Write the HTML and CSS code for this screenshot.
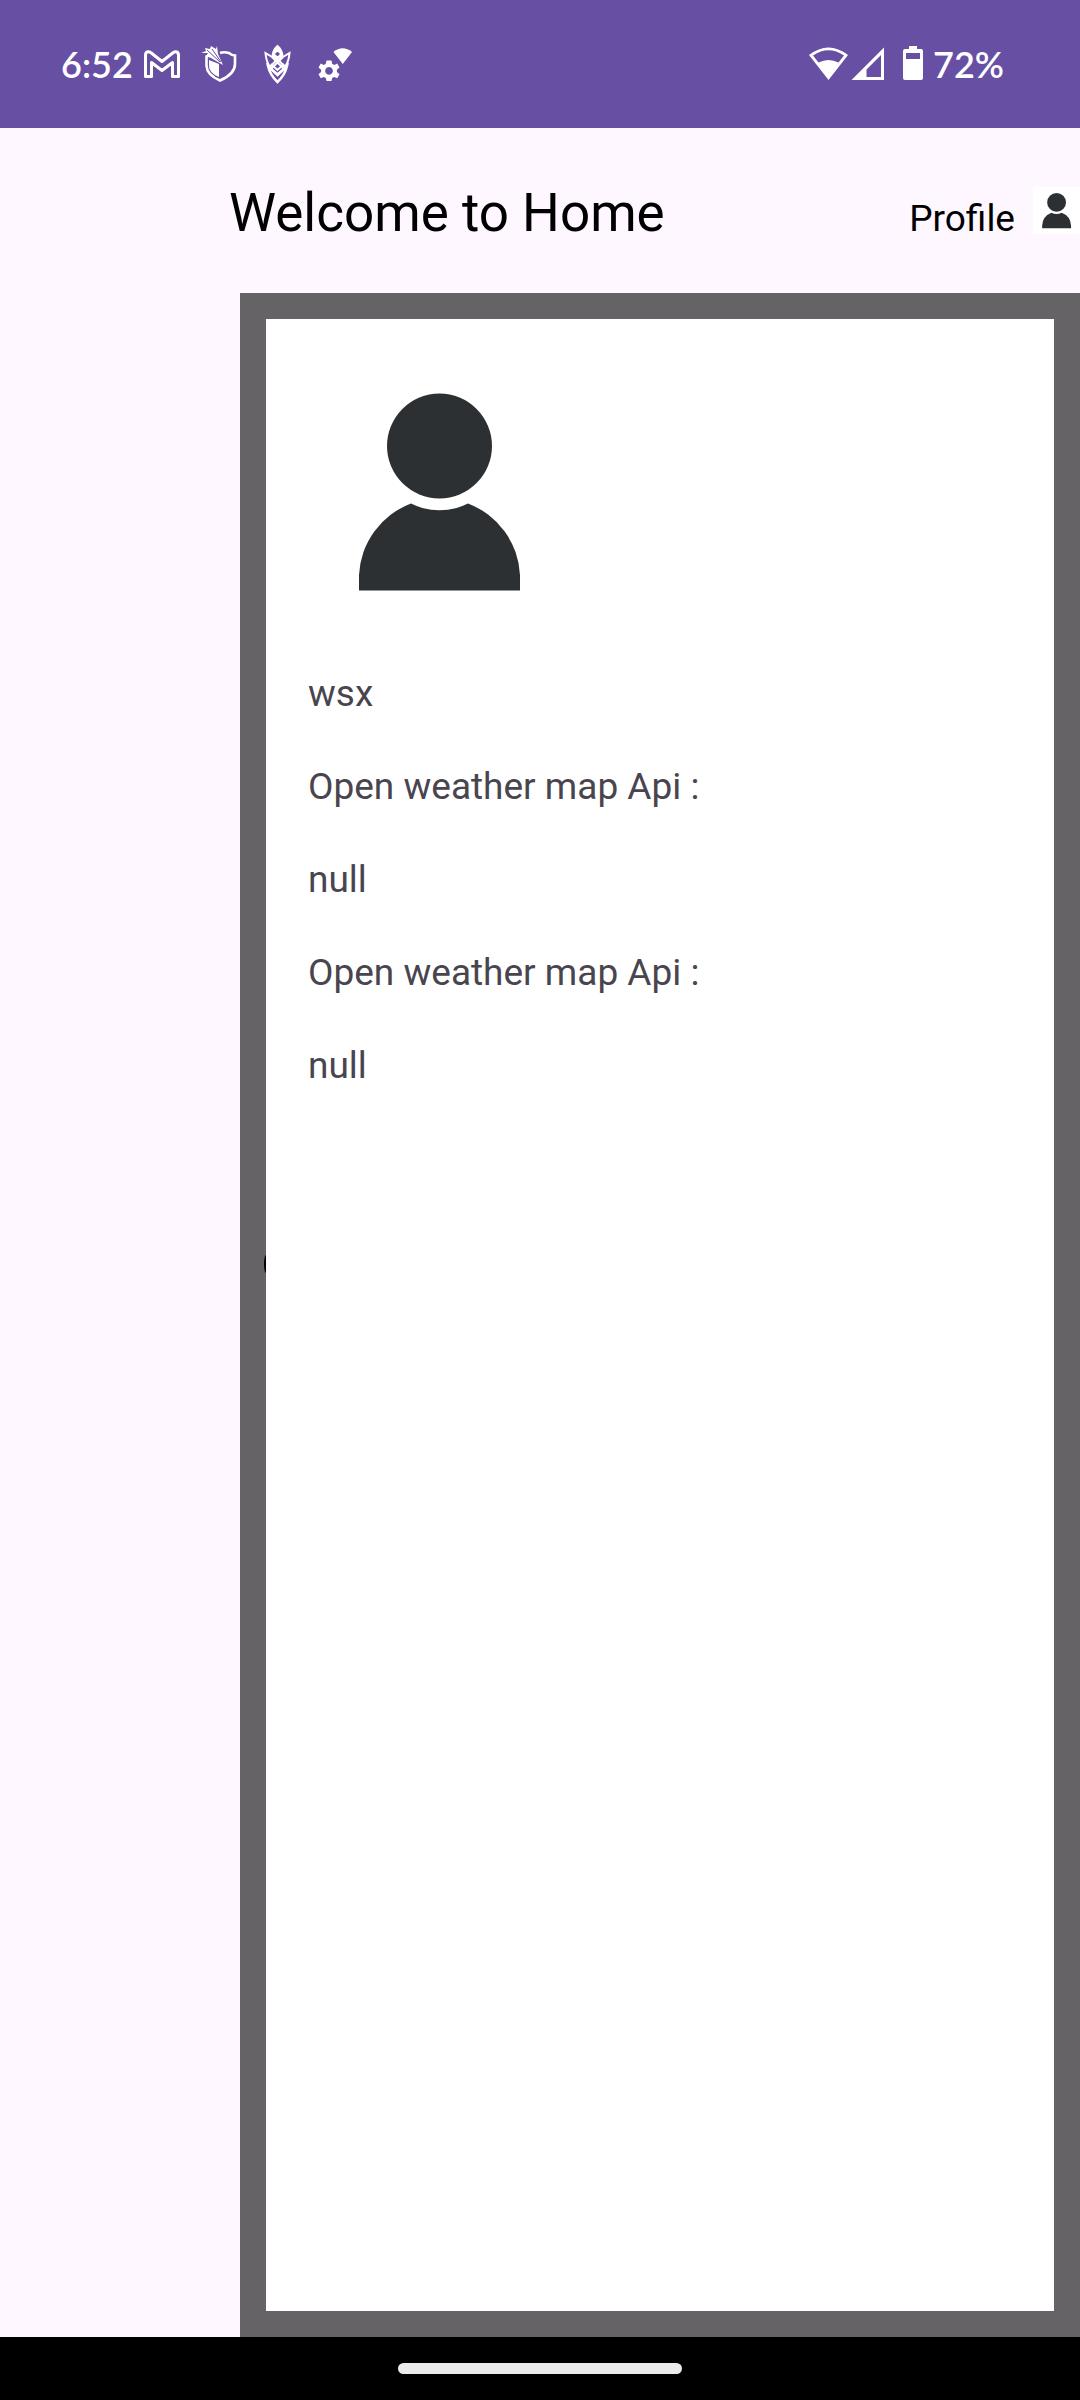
FILE: index.html
```html
<!DOCTYPE html>
<html lang="en">
<head>
<meta charset="utf-8">
<meta name="viewport" content="width=device-width, initial-scale=1">
<title>Home</title>
<link rel="stylesheet" href="styles.css">
</head>
<body>
<svg class="defs" aria-hidden="true">
  <symbol id="person" viewBox="0 0 262 262">
    <circle cx="131.5" cy="86" r="52.5"/>
    <path d="M51 230.5V215A80.5 80.5 0 0 1 103 143.5A64 64 0 0 0 160 143.5A80.5 80.5 0 0 1 212 215V230.5Z"/>
  </symbol>
</svg>
<div class="status">
  <span class="clock">6:52</span>
  <div class="notices">
    <svg class="icon" viewBox="0 0 40 40" fill="none" stroke="#fff" stroke-width="3" stroke-linejoin="round">
      <path d="M3.500 32.500V11Q3.500 7.800 6.500 7.800Q7.800 7.800 9 8.800L20 17.500L31 8.800Q32.200 7.800 33.500 7.800Q36.500 7.800 36.500 11V32.500H30.500V18.500L20 26.500L9.500 18.500V32.500Z"/>
    </svg>
    <svg class="icon" viewBox="0 0 40 40">
      <path d="M12 11Q8 12 6.500 12.500V22Q7 31 20 36.500Q35 30 35 20V11.500Q32 11.500 29 9Q24 7.500 20 9" fill="none" stroke="#fff" stroke-width="2.600"/>
      <path d="M9 16L19 20V33Q9 29 9 22Z" fill="#fff"/>
      <path d="M5 4L10 5L11 2L16 5L17 2L18 10L23 21L11 14L6 12L8 9L1 9L6 7Z" fill="#fff"/>
      <path d="M7 6L20 18M12 5L21 18" stroke="#6750a4" stroke-width="1"/>
    </svg>
    <svg class="icon" viewBox="0 0 40 40" fill="none" stroke="#fff" stroke-width="2">
      <path d="M14.500 12Q15 6 19.500 2Q24 6 24.500 12L19.500 16Z" fill="#fff"/>
      <path d="M19.500 8V12M17.500 10H21.500" stroke="#6750a4"/>
      <path d="M7.500 9Q8 17 12 23L19.500 15L27 23Q31 17 31.500 9L25 13L13 25L19.500 30L26 25L14 13Z"/>
      <path d="M10 22Q12 31 19.500 38Q27 31 29 22L19.500 31Z" stroke-width="2.500"/>
      <path d="M13 20L19.500 26L26 20"/>
    </svg>
    <svg class="icon" viewBox="0 0 40 40" fill="#fff">
      <path d="M17.500 8Q26.500 .500 36 8L26.800 20Z"/>
      <path fill-rule="evenodd" d="M10.500 16.500h5l.7 3.300 2 1.100 3-1.300 2.300 4-2.600 2.200v2.200l2.600 2.200-2.300 4-3-1.300-2 1.100-.7 3h-5l-.7-3-2-1.100-3 1.300-2.300-4 2.600-2.200v-2.200l-2.600-2.200 2.300-4 3 1.300 2-1.100ZM13 23a3.900 3.900 0 1 0 .01 0Z"/>
    </svg>
  </div>
  <div class="system">
    <svg class="wifi" viewBox="0 0 40 40" fill="#fff">
      <path fill-rule="evenodd" d="M0 11Q19.500-4 39 11L19.500 36ZM4 11.500L9.500 18.500Q19.500 13.500 29.500 18.500L35 11.500Q19.500 1 4 11.500Z"/>
    </svg>
    <svg class="signal" viewBox="0 0 36 40" fill="#fff">
      <path fill-rule="evenodd" d="M2.500 36L35 3.500V36ZM17.500 25.500V33H32V11Z"/>
    </svg>
    <svg class="battery" viewBox="0 0 20 40" fill="#fff">
      <path fill-rule="evenodd" d="M6 2H14V5H18Q20 5 20 7V34Q20 36 18 36H2Q0 36 0 34V7Q0 5 2 5H6ZM3 9V15H17V9Z"/>
    </svg>
    <span>72%</span>
  </div>
</div>
<header class="header">
  <h1 class="title">Welcome to Home</h1>
  <a class="profile" href="#profile">Profile<svg class="avatar"><use href="#person"/></svg></a>
</header>
<main class="panel" id="profile">
  <section class="card">
    <svg class="portrait" role="img" aria-label="Profile picture"><use href="#person"/></svg>
    <p>wsx</p>
    <p>Open weather map Api :</p>
    <p>null</p>
    <p>Open weather map Api :</p>
    <p>null</p>
  </section>
  <span class="peek"></span>
</main>
<footer class="navbar"><span class="handle"></span></footer>
</body>
</html>
```
FILE: styles.css
```css
* { box-sizing: border-box; }
body {
  margin: 0;
  min-height: 100vh;
  display: flex;
  flex-direction: column;
  overflow-x: hidden;
  background: #fef7ff;
  font-family: Roboto, "Liberation Sans", sans-serif;
  font-size: 37px;
  line-height: 43px;
}
svg { display: block; flex: none; }
.defs { position: absolute; width: 0; height: 0; }
.status {
  height: 128px;
  padding: 0 76px 0 61px;
  display: flex;
  align-items: center;
  background: #6750a4;
  color: #fff;
  font-family: Lato, sans-serif;
  font-size: 36px;
  font-weight: 600;
}
.clock { width: 81px; }
.notices { display: flex; gap: 18px; }
.icon { width: 40px; height: 40px; }
.system { margin-left: auto; display: flex; align-items: center; }
.wifi { width: 40px; height: 40px; }
.signal { width: 36px; height: 40px; margin-right: 18px; }
.battery { width: 20px; height: 40px; margin-right: 10px; }
.header {
  height: 165px;
  padding: 54px 0 0 229px;
  display: flex;
  align-items: baseline;
  justify-content: space-between;
  color: #000;
}
.title {
  margin: 0;
  font-size: 53px;
  font-weight: 400;
  line-height: 62px;
}
.profile {
  display: flex;
  color: inherit;
  text-decoration: none;
}
.avatar {
  width: 47px;
  height: 47px;
  margin: -10px 0 0 18px;
  background: #fff;
  fill: #2d3032;
}
.panel {
  position: relative;
  flex: 1;
  margin-left: 240px;
  padding: 26px;
  display: flex;
  background: #656366;
}
.card {
  flex: 1;
  padding: 41px 42px;
  background: #fff;
  color: #49454f;
}
.card p { margin: 50px 0 0; }
.portrait { width: 262px; height: 262px; fill: #2d3032; }
/* edge of the control that sits behind the card */
.peek {
  position: absolute;
  left: 24px;
  top: 962px;
  width: 2px;
  height: 18px;
  border-radius: 2px 0 0 2px / 9px 0 0 9px;
  background: #000;
}
.navbar {
  height: 63px;
  display: flex;
  align-items: center;
  justify-content: center;
  background: #000;
}
.handle {
  width: 284px;
  height: 11px;
  border-radius: 6px;
  background: #ebebeb;
}
```
